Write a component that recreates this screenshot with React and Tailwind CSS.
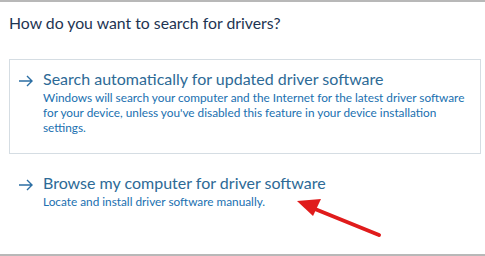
import React from 'react'

function Arrow() {
    return (
        <svg width="16" height="12" viewBox="0 0 16 12" className="shrink-0 mt-[7px]">
            <path d="M1 6 H14 M9 1 L14 6 L9 11" fill="none" stroke="#2b6ea3" strokeWidth="1.4" />
        </svg>
    )
}

function Option({ title, children, boxed }) {
    return (
        <div className={`flex gap-[9px] pl-[8px] pr-2 pt-[8px] border ${boxed ? 'border-[#d5dde3] pb-[18px]' : 'border-transparent'}`}>
            <Arrow />
            <div>
                <div className="text-[16px] leading-[22px] text-[#2d6a96]">{title}</div>
                <div className="text-[11.8px] leading-[15px] text-[#2070b0]">{children}</div>
            </div>
        </div>
    )
}

export default function App() {
    return (
        <div className="relative w-[485px] h-[256px] bg-white overflow-hidden border-t-2 border-b-2 border-[#b8b8b8]" style={{ fontFamily: 'Lato, "Noto Sans", sans-serif' }}>
            <div className="pl-[9px] pr-[4px]">
                <div className="pt-[10px] text-[15.8px] leading-[22px] text-[#1d3452]">How do you want to search for drivers?</div>
                <div className="mt-[25px]">
                    <Option boxed title="Search automatically for updated driver software">
                        Windows will search your computer and the Internet for the latest driver software for your device, unless you've disabled this feature in your device installation settings.
                    </Option>
                </div>
                <div className="mt-[9px]">
                    <Option title="Browse my computer for driver software">
                        Locate and install driver software manually.
                    </Option>
                </div>
            </div>
            <svg className="absolute left-0 top-0" width="485" height="256" viewBox="0 0 485 256">
                <path d="M379 233 L310 205" stroke="#e01b1b" strokeWidth="4" strokeLinecap="round" />
                <path d="M297 199 L321 197 L313 214 Z" fill="#e01b1b" />
            </svg>
        </div>
    )
}
